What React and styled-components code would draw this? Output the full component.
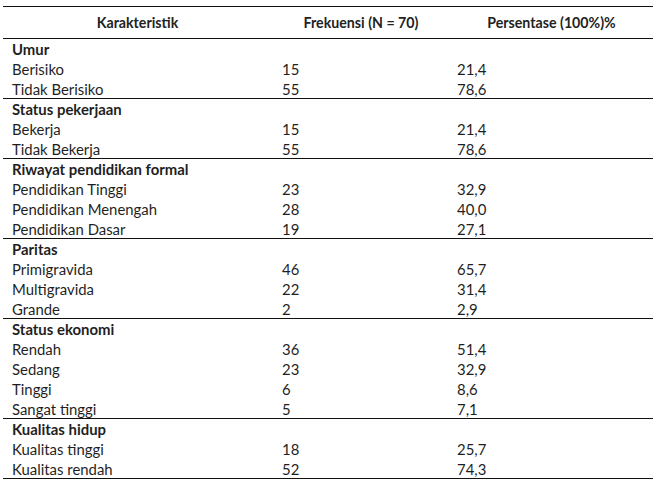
import React from 'react';
import styled, { createGlobalStyle } from 'styled-components';

const GlobalStyle = createGlobalStyle`
  html, body {
    margin: 0;
    padding: 0;
    background: #fff;
  }
  body {
    font-family: Lato, "Liberation Sans", sans-serif;
    color: #1f1f1f;
  }
`

const Wrap = styled.div`
  padding: 6px 7px 0 3px;
`

const Table = styled.div`
  width: 650px;
  border-top: 1px solid #111;
`

const Row = styled.div`
  display: grid;
  grid-template-columns: 269px 178px 203px;
  height: ${props => props.head ? '32px' : '20px'};
  align-items: center;
  box-sizing: border-box;
  border-bottom: ${props => props.line ? '1px solid #111' : 'none'};
  font-size: 14.9px;
`

const HeadCell = styled.div`
  text-align: center;
  font-size: 14.2px;
  font-weight: 700;
  color: #222;
`

const Cell = styled.div`
  padding-left: ${props => props.pad}px;
  font-weight: ${props => props.bold ? 700 : 400};
  white-space: nowrap;
  line-height: 18px;
`

const sections = [
  { title: 'Umur', rows: [['Berisiko', '15', '21,4'], ['Tidak Berisiko', '55', '78,6']] },
  { title: 'Status pekerjaan', rows: [['Bekerja', '15', '21,4'], ['Tidak Bekerja', '55', '78,6']] },
  {
    title: 'Riwayat pendidikan formal',
    rows: [['Pendidikan Tinggi', '23', '32,9'], ['Pendidikan Menengah', '28', '40,0'], ['Pendidikan Dasar', '19', '27,1']],
  },
  {
    title: 'Paritas',
    rows: [['Primigravida', '46', '65,7'], ['Multigravida', '22', '31,4'], ['Grande', '2', '2,9']],
  },
  {
    title: 'Status ekonomi',
    rows: [['Rendah', '36', '51,4'], ['Sedang', '23', '32,9'], ['Tinggi', '6', '8,6'], ['Sangat tinggi', '5', '7,1']],
  },
  { title: 'Kualitas hidup', rows: [['Kualitas tinggi', '18', '25,7'], ['Kualitas rendah', '52', '74,3']] },
]

export default function App() {
  return (
    <Wrap>
      <GlobalStyle />
      <Table>
        <Row head line>
          <HeadCell>Karakteristik</HeadCell>
          <HeadCell>Frekuensi (N = 70)</HeadCell>
          <HeadCell>Persentase (100%)%</HeadCell>
        </Row>
        {sections.map(sec => (
          <React.Fragment key={sec.title}>
            <Row>
              <Cell pad={9} bold>{sec.title}</Cell>
              <Cell />
              <Cell />
            </Row>
            {sec.rows.map((r, i) => (
              <Row key={r[0]} line={i === sec.rows.length - 1}>
                <Cell pad={9}>{r[0]}</Cell>
                <Cell pad={10}>{r[1]}</Cell>
                <Cell pad={7}>{r[2]}</Cell>
              </Row>
            ))}
          </React.Fragment>
        ))}
      </Table>
    </Wrap>
  )
}
